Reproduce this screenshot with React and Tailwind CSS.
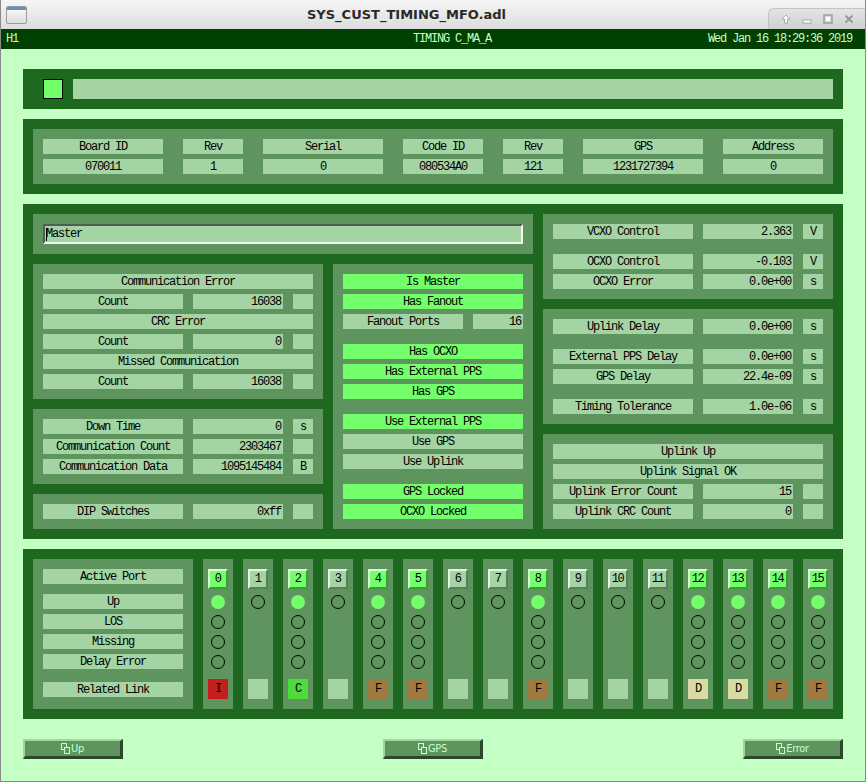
import React from "react";

const LT = "bg-[#a4d4a4]";
const GR = "bg-[#73ff6b]";
const MONO = "font-['Liberation_Mono',monospace] text-[12px] tracking-[-1.2px] text-black";

const linkColors = {
  I: "bg-[#c41e1e]",
  C: "bg-[#4cdc3c]",
  F: "bg-[#a07a40]",
  D: "bg-[#d9dba3]",
};

const ports = [
  { n: 0, on: true, link: "I" },
  { n: 1 },
  { n: 2, on: true, link: "C" },
  { n: 3 },
  { n: 4, on: true, link: "F" },
  { n: 5, on: true, link: "F" },
  { n: 6 },
  { n: 7 },
  { n: 8, on: true, link: "F" },
  { n: 9 },
  { n: 10 },
  { n: 11 },
  { n: 12, on: true, link: "D" },
  { n: 13, on: true, link: "D" },
  { n: 14, on: true, link: "F" },
  { n: 15, on: true, link: "F" },
];

function Cell({ w, bg = LT, right, children, className = "" }) {
  return (
    <div
      className={`${w} h-[15px] shrink-0 flex items-center ${
        right ? "justify-end pr-[2px]" : "justify-center"
      } ${bg} ${className}`}
    >
      <span className="leading-none whitespace-pre">{children}</span>
    </div>
  );
}

function Readout({ label, value, unit, className = "" }) {
  return (
    <div className={`flex gap-[10px] ${className}`}>
      <Cell w="w-[140px]">{label}</Cell>
      <Cell w="w-[90px]" right>
        {value}
      </Cell>
      <Cell w="w-[20px]">{unit}</Cell>
    </div>
  );
}

function Inner({ className = "", children }) {
  return <div className={`bg-[#5e945e] p-[10px] flex flex-col gap-[5px] ${className}`}>{children}</div>;
}

function Circle({ on, hidden }) {
  if (hidden) return <div className="w-[14px] h-[14px]" />;
  return on ? (
    <div className="w-[14px] h-[14px] rounded-full bg-[#73ff6b]" />
  ) : (
    <div className="w-[14px] h-[14px] rounded-full border border-black" />
  );
}

function PortColumn({ p }) {
  const btn = p.on
    ? "bg-[#73ff6b] border-t-[#d6ffd2] border-l-[#d6ffd2] border-b-[#3d9a38] border-r-[#3d9a38]"
    : "bg-[#a4d4a4] border-t-[#e2f4e2] border-l-[#e2f4e2] border-b-[#5a7d5a] border-r-[#5a7d5a]";
  return (
    <div className="w-[30px] h-[150px] bg-[#5e945e] flex flex-col items-center pt-[10px]">
      <div className={`w-[20px] h-[20px] border-2 flex items-center justify-center ${btn}`}>
        <span className="leading-none tracking-[-1.5px] -ml-[1px]">{p.n}</span>
      </div>
      <div className="mt-[6px] flex flex-col gap-[6px]">
        <Circle on={p.on} />
        <Circle hidden={!p.on} />
        <Circle hidden={!p.on} />
        <Circle hidden={!p.on} />
      </div>
      <div
        className={`mt-[10px] w-[20px] h-[20px] flex items-center justify-center ${
          p.link ? linkColors[p.link] : LT
        }`}
      >
        <span className="leading-none">{p.link}</span>
      </div>
    </div>
  );
}

function RelatedIcon() {
  return (
    <svg width="9" height="11" viewBox="0 0 9 11" className="mr-[1px]">
      <rect x="0.5" y="0.5" width="5" height="6" fill="none" stroke="#c8ffc8" />
      <rect x="3.5" y="4.5" width="5" height="6" fill="#5e945e" stroke="#c8ffc8" />
    </svg>
  );
}

function MenuButton({ children }) {
  return (
    <div className="w-[100px] h-[20px] bg-[#5e945e] border-t-2 border-l-2 border-t-[#a4d4a4] border-l-[#a4d4a4] border-b-[3px] border-r-[3px] border-b-[#2c472c] border-r-[#2c472c] flex items-center justify-center">
      <RelatedIcon />
      <span className="font-['DejaVu_Sans_Condensed',sans-serif] text-[11px] tracking-[-0.3px] text-[#c8ffc8] leading-none">
        {children}
      </span>
    </div>
  );
}

function TitleBar() {
  return (
    <div className="h-[29px] flex items-center bg-gradient-to-b from-[#f6f6f6] to-[#dcdcdc]">
      <div className="w-[30px] pl-[5px] flex items-center">
        <div className="w-[21px] h-[18px] border border-[#9a9a9a] bg-gradient-to-b from-[#fafafa] to-[#dedede] rounded-[2px] overflow-hidden">
          <div className="h-[3px] bg-[#6a8ccc]" />
        </div>
      </div>
      <div className="flex-1 text-center pl-[14px] font-['DejaVu_Sans',sans-serif] font-bold text-[13px] text-[#2a2a2a]">
        SYS_CUST_TIMING_MFO.adl
      </div>
      <div className="w-[97px] h-[21px] self-end bg-gradient-to-b from-[#e4e4e4] to-[#d0d0d0] rounded-tl-[6px] border-l border-t border-[#c4c4c4] flex items-center justify-around px-[6px]">
        <svg width="10" height="10" viewBox="0 0 10 10">
          <path d="M5 1 L9 5 L6.5 5 L6.5 9 L3.5 9 L3.5 5 L1 5 Z" fill="#ffffff" stroke="#9a9a9a" strokeWidth="0.8" />
        </svg>
        <svg width="10" height="10" viewBox="0 0 10 10">
          <rect x="1" y="6" width="8" height="3" fill="#ffffff" stroke="#9a9a9a" strokeWidth="0.8" />
        </svg>
        <svg width="10" height="10" viewBox="0 0 10 10">
          <rect x="1" y="1" width="8" height="8" fill="none" stroke="#9a9a9a" strokeWidth="1.4" />
          <rect x="3" y="3" width="4" height="4" fill="#ffffff" />
        </svg>
        <svg width="10" height="10" viewBox="0 0 10 10">
          <path d="M1.5 1.5 L8.5 8.5 M8.5 1.5 L1.5 8.5" stroke="#9a9a9a" strokeWidth="2" />
        </svg>
      </div>
    </div>
  );
}

export default function App() {
  return (
    <div className="w-[866px] h-[782px] flex flex-col bg-[#c4ffc4] border-x border-b border-[#8a8a8a] overflow-hidden">
      <TitleBar />

      <div className="h-[20px] bg-[#004000] flex items-center font-['Liberation_Mono',monospace] text-[12px] tracking-[-1.2px] text-[#c8ffc8]">
        <div className="w-[412px] pl-[5px]">H1</div>
        <div>TIMING C_MA_A</div>
        <div className="flex-1 text-right pr-[13px]">Wed Jan 16 18:29:36 2019</div>
      </div>

      <div className={`flex-1 pl-[22px] pt-[20px] flex flex-col gap-[10px] ${MONO}`}>
        {/* status bar */}
        <div className="w-[820px] h-[40px] bg-[#1f681f] pl-[20px] pr-[10px] flex items-center gap-[10px]">
          <div className="w-[20px] h-[20px] bg-[#73ff6b] border border-black" />
          <div className={`flex-1 h-[20px] ${LT}`} />
        </div>

        {/* board info */}
        <div className="w-[820px] bg-[#1f681f] p-[10px]">
          <div className="bg-[#5e945e] p-[10px] flex flex-col gap-[5px]">
            <div className="flex gap-[20px]">
              <Cell w="w-[120px]">Board ID</Cell>
              <Cell w="w-[60px]">Rev</Cell>
              <Cell w="w-[120px]">Serial</Cell>
              <Cell w="w-[80px]">Code ID</Cell>
              <Cell w="w-[60px]">Rev</Cell>
              <Cell w="w-[120px]">GPS</Cell>
              <Cell w="w-[100px]">Address</Cell>
            </div>
            <div className="flex gap-[20px]">
              <Cell w="w-[120px]">070011</Cell>
              <Cell w="w-[60px]">1</Cell>
              <Cell w="w-[120px]">0</Cell>
              <Cell w="w-[80px]">080534A0</Cell>
              <Cell w="w-[60px]">121</Cell>
              <Cell w="w-[120px]">1231727394</Cell>
              <Cell w="w-[100px]">0</Cell>
            </div>
          </div>
        </div>

        {/* main status */}
        <div className="w-[820px] bg-[#1f681f] p-[10px] flex gap-[10px]">
          <div className="w-[500px] flex flex-col gap-[10px]">
            <div className="h-[40px] bg-[#5e945e] p-[10px]">
              <div className="h-[20px] bg-[#a4d4a4] border-2 border-t-[#4f5f4f] border-l-[#4f5f4f] border-b-[#eef8ee] border-r-[#eef8ee] flex items-center pl-[1px]">
                <div className="w-[1px] h-[13px] bg-black" />
                <span className="leading-none -ml-[1px]">Master</span>
              </div>
            </div>
            <div className="flex gap-[10px]">
              <div className="w-[290px] flex flex-col gap-[10px]">
                <Inner>
                  <Cell w="w-[270px]">Communication Error</Cell>
                  <Readout label="Count" value="16038" />
                  <Cell w="w-[270px]">CRC Error</Cell>
                  <Readout label="Count" value="0" />
                  <Cell w="w-[270px]">Missed Communication</Cell>
                  <Readout label="Count" value="16038" />
                </Inner>
                <Inner>
                  <Readout label="Down Time" value="0" unit="s" />
                  <Readout label="Communication Count" value="2303467" />
                  <Readout label="Communication Data" value="1095145484" unit="B" />
                </Inner>
                <Inner>
                  <Readout label="DIP Switches" value="0xff" />
                </Inner>
              </div>
              <Inner className="w-[200px]">
                <Cell w="w-[180px]" bg={GR}>Is Master</Cell>
                <Cell w="w-[180px]" bg={GR}>Has Fanout</Cell>
                <div className="flex gap-[10px]">
                  <Cell w="w-[120px]">Fanout Ports</Cell>
                  <Cell w="w-[50px]" right>16</Cell>
                </div>
                <Cell w="w-[180px]" bg={GR} className="mt-[10px]">Has OCXO</Cell>
                <Cell w="w-[180px]" bg={GR}>Has External PPS</Cell>
                <Cell w="w-[180px]" bg={GR}>Has GPS</Cell>
                <Cell w="w-[180px]" bg={GR} className="mt-[10px]">Use External PPS</Cell>
                <Cell w="w-[180px]">Use GPS</Cell>
                <Cell w="w-[180px]">Use Uplink</Cell>
                <Cell w="w-[180px]" bg={GR} className="mt-[10px]">GPS Locked</Cell>
                <Cell w="w-[180px]" bg={GR}>OCXO Locked</Cell>
              </Inner>
            </div>
          </div>

          <div className="w-[290px] flex flex-col gap-[10px]">
            <Inner>
              <Readout label="VCXO Control" value="2.363" unit="V" />
              <Readout label="OCXO Control" value="-0.103" unit="V" className="mt-[10px]" />
              <Readout label="OCXO Error" value="0.0e+00" unit="s" />
            </Inner>
            <Inner>
              <Readout label="Uplink Delay" value="0.0e+00" unit="s" />
              <Readout label="External PPS Delay" value="0.0e+00" unit="s" className="mt-[10px]" />
              <Readout label="GPS Delay" value="22.4e-09" unit="s" />
              <Readout label="Timing Tolerance" value="1.0e-06" unit="s" className="mt-[10px]" />
            </Inner>
            <Inner>
              <Cell w="w-[270px]">Uplink Up</Cell>
              <Cell w="w-[270px]">Uplink Signal OK</Cell>
              <Readout label="Uplink Error Count" value="15" />
              <Readout label="Uplink CRC Count" value="0" />
            </Inner>
          </div>
        </div>

        {/* ports */}
        <div className="w-[820px] bg-[#1f681f] p-[10px] flex gap-[10px]">
          <div className="w-[160px] h-[150px] bg-[#5e945e] p-[10px] flex flex-col">
            <Cell w="w-[140px]">Active Port</Cell>
            <div className="mt-[10px] flex flex-col gap-[5px]">
              <Cell w="w-[140px]">Up</Cell>
              <Cell w="w-[140px]">LOS</Cell>
              <Cell w="w-[140px]">Missing</Cell>
              <Cell w="w-[140px]">Delay Error</Cell>
            </div>
            <Cell w="w-[140px]" className="mt-[13px]">Related Link</Cell>
          </div>
          {ports.map((p) => (
            <PortColumn key={p.n} p={p} />
          ))}
        </div>

        {/* related displays */}
        <div className="w-[820px] mt-[10px] flex justify-between">
          <MenuButton>Up</MenuButton>
          <MenuButton>GPS</MenuButton>
          <MenuButton>Error</MenuButton>
        </div>
      </div>
    </div>
  );
}
